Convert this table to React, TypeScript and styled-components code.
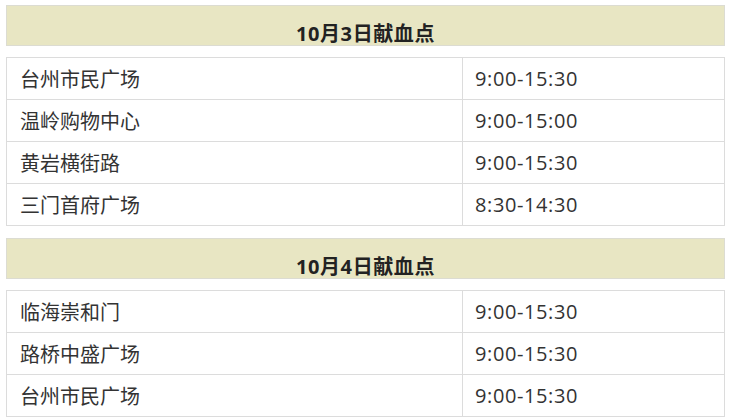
import styled, { createGlobalStyle } from 'styled-components';

const GlobalStyle = createGlobalStyle`
    html, body {
        margin: 0;
        padding: 0;
        background: #fff;
    }
    body {
        font-family: "Open Sans", "Noto Sans CJK SC", sans-serif;
        color: #333;
    }
`;

const Page = styled.div`
    width: 719px;
    padding: 5px 0 0 6px;
    display: flex;
    flex-direction: column;
    gap: 12px;
`;

const Section = styled.section`
    display: flex;
    flex-direction: column;
    gap: 11px;
`;

const Heading = styled.h2`
    margin: 0;
    height: 41px;
    box-sizing: border-box;
    padding-top: 15px;
    background-color: #e8e6c3;
    border: 1px solid #dcdcd2;
    text-align: center;
    font-size: 20px;
    letter-spacing: 0.6px;
    line-height: 26px;
    font-weight: 700;
    color: #222;
`;

const Table = styled.table`
    width: 100%;
    border-collapse: collapse;
    table-layout: fixed;
`;

const Cell = styled.td<{ $time?: boolean }>`
    height: 41px;
    padding: 0 0 0 ${p => (p.$time ? 12 : 13)}px;
    border: 1px solid #dcdcdc;
    font-size: 20px;
    letter-spacing: ${p => (p.$time ? '0.6px' : '0')};
    color: #333;
    width: ${p => (p.$time ? '249px' : 'auto')};
    vertical-align: middle;
`;

interface Spot {
    place: string;
    time: string;
}

const days: { title: string; spots: Spot[] }[] = [
    {
        title: '10月3日献血点',
        spots: [
            { place: '台州市民广场', time: '9:00-15:30' },
            { place: '温岭购物中心', time: '9:00-15:00' },
            { place: '黄岩横街路', time: '9:00-15:30' },
            { place: '三门首府广场', time: '8:30-14:30' },
        ],
    },
    {
        title: '10月4日献血点',
        spots: [
            { place: '临海崇和门', time: '9:00-15:30' },
            { place: '路桥中盛广场', time: '9:00-15:30' },
            { place: '台州市民广场', time: '9:00-15:30' },
        ],
    },
];

export default function App() {
    return (
        <>
            <GlobalStyle />
            <Page>
                {days.map(day => (
                    <Section key={day.title}>
                        <Heading>{day.title}</Heading>
                        <Table>
                            <tbody>
                                {day.spots.map((spot, i) => (
                                    <tr key={i}>
                                        <Cell>{spot.place}</Cell>
                                        <Cell $time>{spot.time}</Cell>
                                    </tr>
                                ))}
                            </tbody>
                        </Table>
                    </Section>
                ))}
            </Page>
        </>
    );
}
